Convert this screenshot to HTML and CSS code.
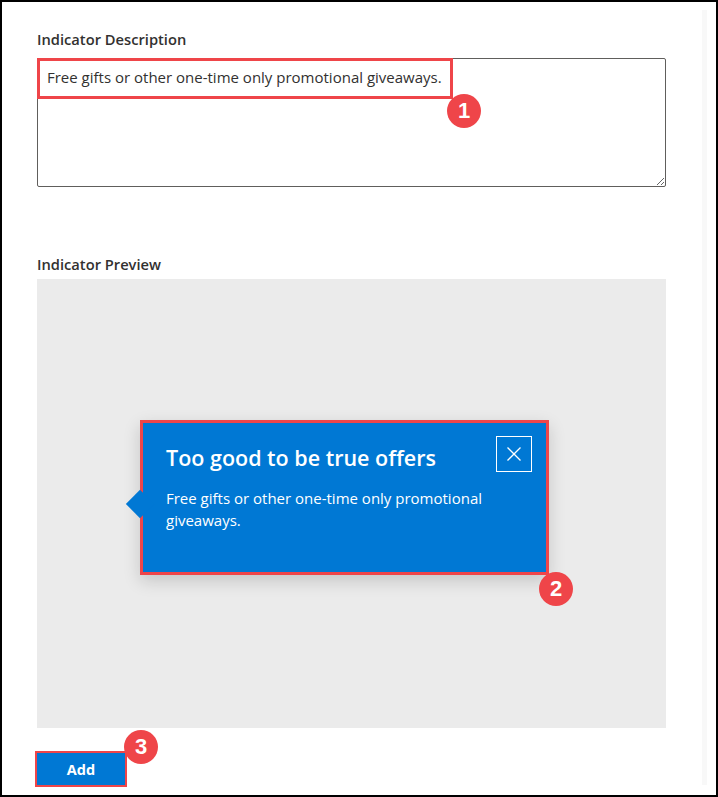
FILE: index.html
```html
<!DOCTYPE html>
<html lang="en">
<head>
    <meta charset="UTF-8">
    <meta name="viewport" content="width=device-width, initial-scale=1.0">
    <title>Indicator</title>
    <link rel="stylesheet" href="styles.css">
</head>
<body>

<div class="frame">
    <div class="panel">
        <label class="field-label">Indicator Description</label>
        <div class="field">
            <textarea class="textarea" readonly>Free gifts or other one-time only promotional giveaways.</textarea>
            <div class="mark mark-text"></div>
            <span class="badge badge-one">1</span>
        </div>

        <label class="field-label preview-label">Indicator Preview</label>
        <div class="preview">
            <div class="callout">
                <span class="beak"></span>
                <div class="callout-head">
                    <h2 class="callout-title">Too good to be true offers</h2>
                    <button class="close-btn" aria-label="Close">
                        <svg width="16" height="16" viewBox="0 0 16 16">
                            <path d="M1.5 1.5 L14.5 14.5 M14.5 1.5 L1.5 14.5" stroke="#fff" stroke-width="1.3" fill="none"/>
                        </svg>
                    </button>
                </div>
                <p class="callout-body">Free gifts or other one-time only promotional giveaways.</p>
                <span class="badge badge-two">2</span>
            </div>
        </div>

        <div class="actions">
            <button class="add-btn">Add</button>
            <span class="badge badge-three">3</span>
        </div>
    </div>
    <div class="scrollbar"></div>
</div>

</body>
</html>
```

FILE: styles.css
```css
body {
    margin: 0;
    padding: 0;
    background-color: #fff;
    font-family: "Open Sans", "Noto Sans", Arial, sans-serif;
    color: #323130;
}

.frame {
    width: 718px;
    height: 797px;
    box-sizing: border-box;
    border: 2px solid #000;
    display: flex;
    overflow: hidden;
}

.panel {
    flex: 1;
    padding: 27px 0 0 35px;
}

.scrollbar {
    width: 5px;
    margin: 8px 9px 10px 0;
    background-color: #f8f8f8;
}

.field-label {
    display: block;
    font-size: 14.7px;
    font-weight: 600;
    line-height: 20px;
    margin-bottom: 9px;
}

.preview-label {
    margin-top: 67px;
    margin-bottom: 5px;
}

.field {
    position: relative;
    width: 629px;
}

.textarea {
    display: block;
    width: 629px;
    height: 129px;
    box-sizing: border-box;
    border: 1px solid #605e5c;
    border-radius: 2px;
    padding: 8px 9px;
    font-family: inherit;
    font-size: 15px;
    line-height: 20px;
    color: #323130;
    resize: both;
    outline: none;
}

.mark {
    position: absolute;
    border: 3px solid #ef4549;
    box-sizing: border-box;
    pointer-events: none;
}

.mark-text {
    left: 0;
    top: 0;
    width: 416px;
    height: 41px;
}

.badge {
    position: absolute;
    width: 34px;
    height: 34px;
    border-radius: 50%;
    background-color: #ef4549;
    color: #fff;
    font-family: "Liberation Sans", Arial, sans-serif;
    font-weight: 700;
    font-size: 22px;
    line-height: 34px;
    text-align: center;
    z-index: 2;
}

.badge-one {
    left: 410px;
    top: 36px;
}

.preview {
    width: 629px;
    height: 449px;
    background-color: #ebebeb;
    box-sizing: border-box;
    padding: 141px 0 0 103px;
}

.callout {
    position: relative;
    width: 409px;
    height: 155px;
    box-sizing: border-box;
    background-color: #0078d4;
    color: #fff;
    padding: 16px 17px 0 26px;
    outline: 3px solid #ef4549;
    outline-offset: -3px;
    box-shadow: 0 6px 16px rgba(0, 0, 0, 0.16);
}

.beak {
    position: absolute;
    left: -10px;
    top: 74px;
    width: 20px;
    height: 20px;
    background-color: #0078d4;
    transform: rotate(45deg);
}

.callout-head {
    display: flex;
    justify-content: space-between;
    align-items: flex-start;
}

.callout-title {
    margin: 8px 0 0 0;
    font-size: 21.5px;
    font-weight: 600;
    line-height: 28px;
}

.close-btn {
    width: 36px;
    height: 36px;
    box-sizing: border-box;
    border: 1px solid #fff;
    background: transparent;
    padding: 0;
    display: flex;
    align-items: center;
    justify-content: center;
    cursor: pointer;
}

.callout-body {
    margin: 15px 0 0 0;
    width: 350px;
    font-size: 15px;
    line-height: 22px;
}

.badge-two {
    left: 399px;
    top: 152px;
}

.actions {
    position: relative;
    margin-top: 25px;
}

.add-btn {
    display: block;
    width: 88px;
    height: 32px;
    border: none;
    background-color: #0078d4;
    color: #fff;
    font-family: inherit;
    font-size: 14.5px;
    font-weight: 700;
    outline: 2px solid #ef4549;
    cursor: pointer;
}

.badge-three {
    left: 87px;
    top: -23px;
}
```
